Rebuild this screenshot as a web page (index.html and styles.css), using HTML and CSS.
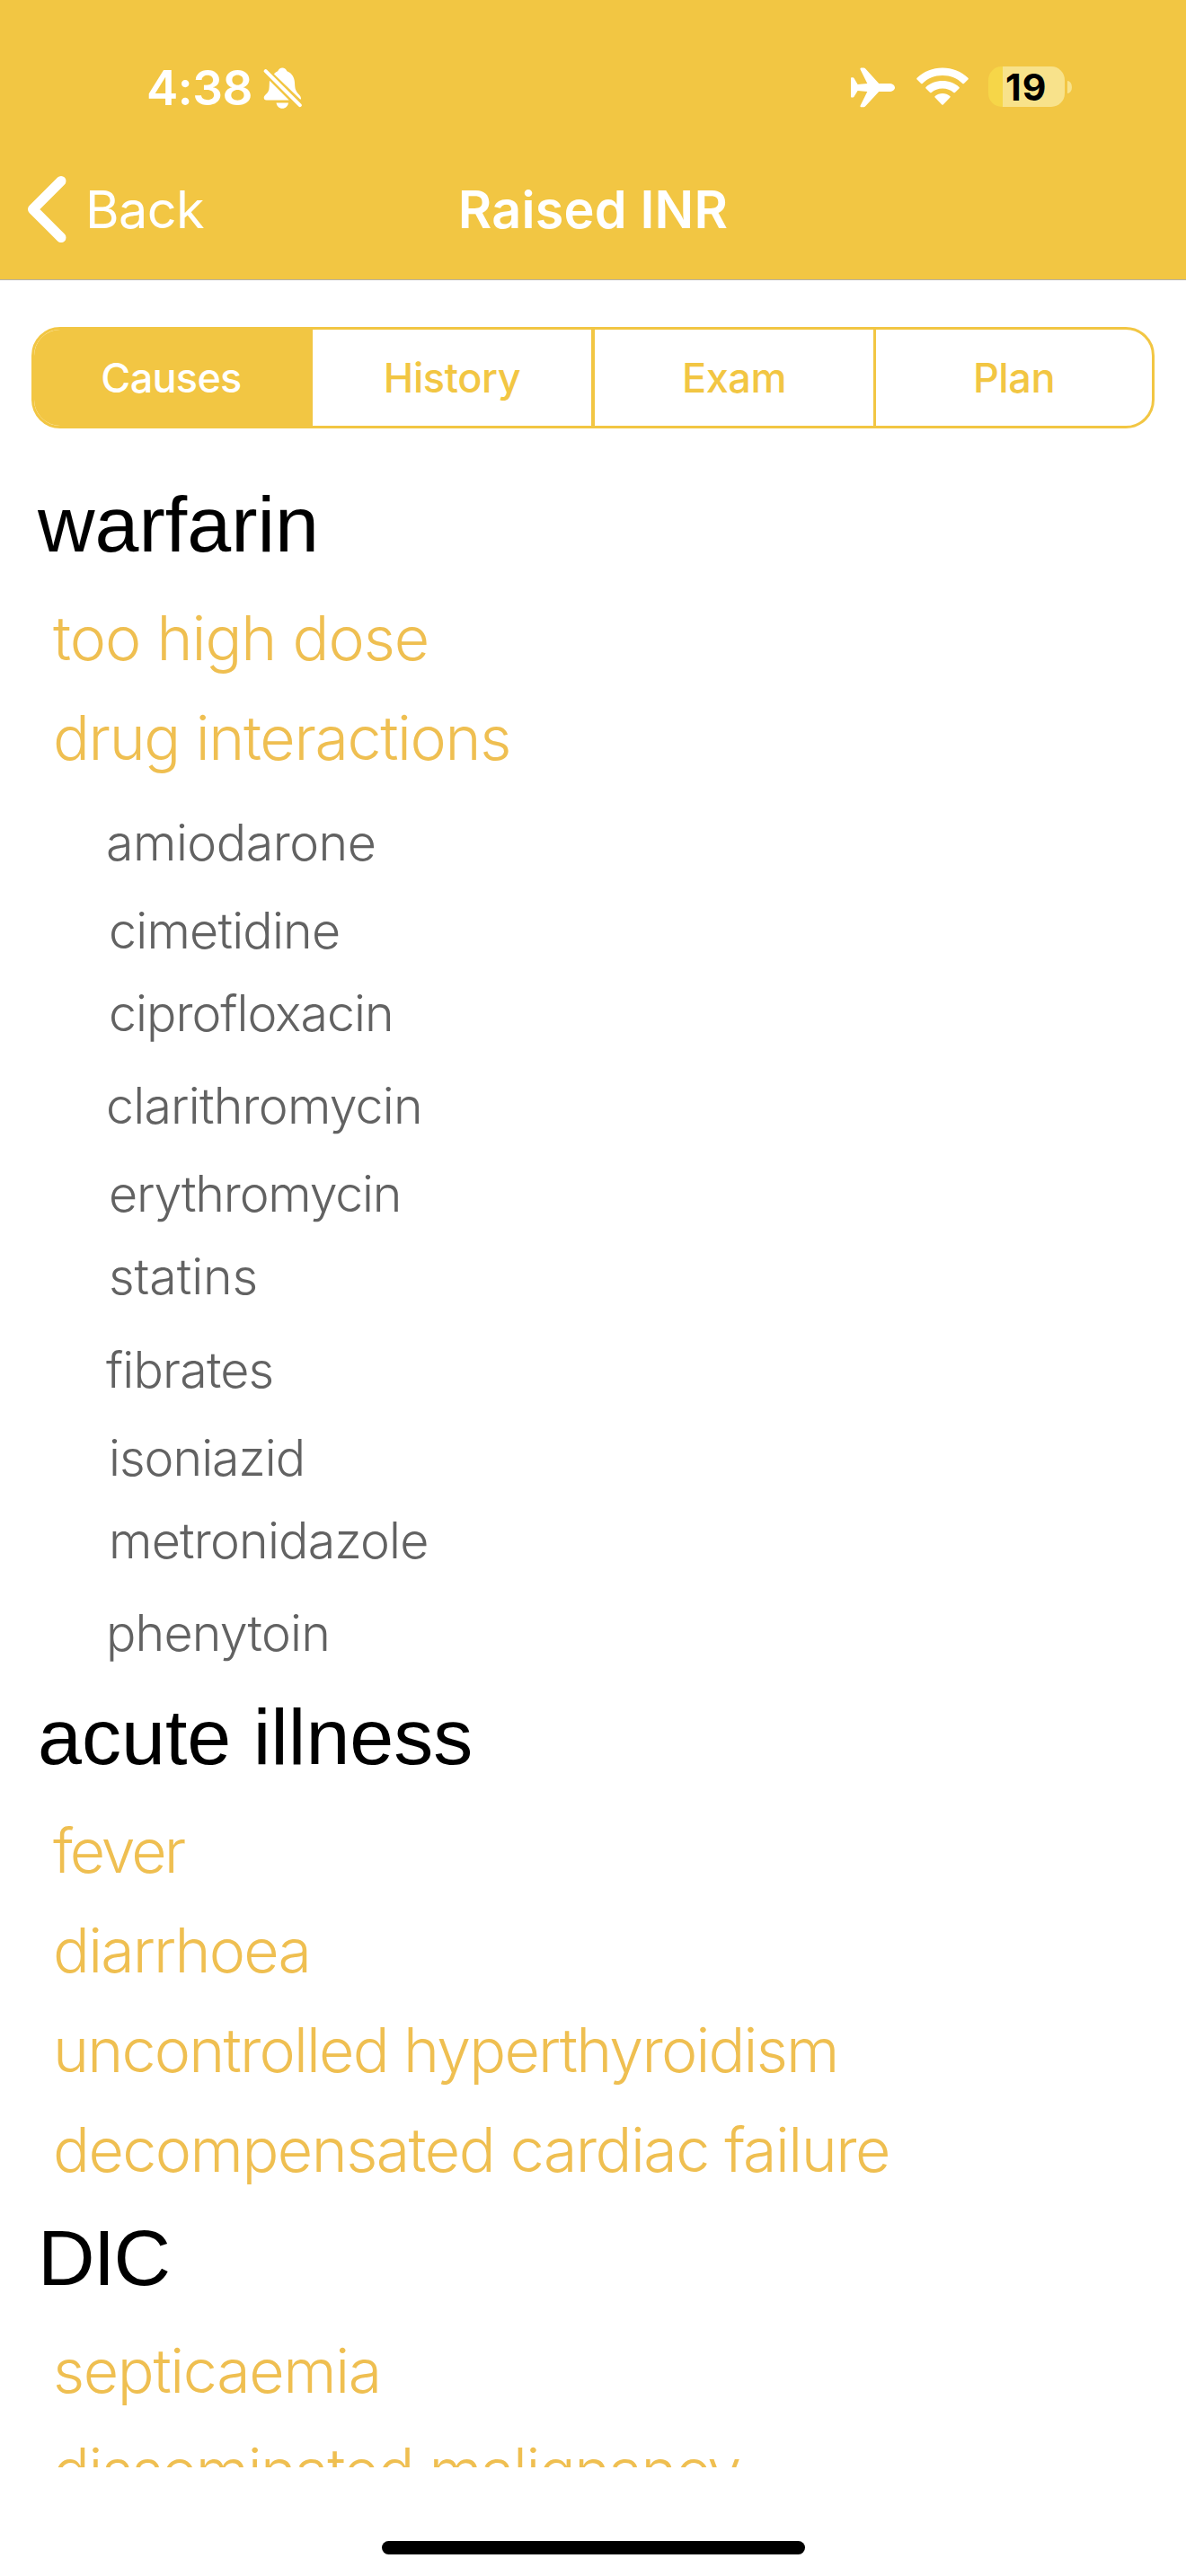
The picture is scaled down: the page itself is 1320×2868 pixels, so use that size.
FILE: index.html
```html
<!DOCTYPE html>
<html lang="en">
<head>
<meta charset="utf-8">
<title>Raised INR</title>
<link rel="stylesheet" href="styles.css">
</head>
<body>
<header class="header">
  <div class="status">
    <span class="time">4:38</span>
    <svg class="bell" width="44" height="48" viewBox="0 0 44 48" fill="#fff">
      <path d="M13 7.400C14 5.800 15.800 5 17.200 4.300C18 1.800 20 .5 22.200 .5C24.500 .5 26.500 1.800 27.400 4.300C33 6.500 35.600 11 36 17C36.300 25 37.200 26.300 40.500 30C42.300 32 43 33 43 35Q43 35.300 42.300 35.800Z"/>
      <path d="M8 14.800L29.700 36.500H4.500C2.600 36.500 1.700 35.300 1.700 33.800C1.700 31 6.600 29 7.400 24.500C7.900 21.500 7.700 18 8 14.800Z"/>
      <path d="M15.500 39.400H29C28.500 43 25.800 45.700 22.200 45.700C18.600 45.700 16 43 15.500 39.400Z"/>
      <path d="M3.700 4.200L41.800 42.200" stroke="#fff" stroke-width="4" stroke-linecap="round"/>
    </svg>
    <svg class="plane" width="49" height="46" viewBox="0 0 49 46" fill="#fff">
      <path d="M0 12Q0 11.200 .8 11.200H2.300Q3 11.200 3.500 12L7.600 19L18.300 18L10.500 2.200Q10 .4 11.500 .4H14.300Q15 .4 15.800 1.100L31.200 17.900H42.500C46.300 17.900 49 20 49 22.500C49 25 46.300 27 42.500 27H31.200L16.200 43.300Q15.200 44.200 14.500 44.200H11.200Q10 44.200 10.600 42.600L18.300 26.900L7.600 26L3.500 32.800Q3 33.500 2.300 33.500H.8Q0 33.500 0 32.700Z"/>
    </svg>
    <svg class="wifi" width="58" height="43" viewBox="0 0 58 43" fill="#fff">
      <path d="M.6 13.500Q-.2 12.700 .6 11.800C8 4.500 18 .4 29 .4C40 .4 50 4.500 57.400 11.800Q58.200 12.700 57.400 13.500L52.900 18Q52.100 18.700 51.300 18C45.500 12.300 37.700 9.100 29 9.100C20.300 9.100 12.500 12.300 6.700 18Q5.900 18.700 5.100 18Z"/>
      <path d="M10.500 23.400Q9.800 22.600 10.500 21.900C15.500 17.200 22 14.900 29 14.900C36 14.900 42.500 17.200 47.500 21.900Q48.200 22.600 47.500 23.400L42.900 28Q42.100 28.700 41.300 28C38 25 33.700 23.400 29 23.400C24.300 23.400 20 25 16.700 28Q15.900 28.700 15.100 28Z"/>
      <path d="M20.600 33.600Q19.900 32.800 20.700 32.100C23 30 26 29.100 29 29.100C32 29.100 35 30 37.300 32.100Q38.100 32.800 37.400 33.600L29.700 41.400Q29 42 28.300 41.400Z"/>
    </svg>
    <div class="battery"><span class="level">19</span></div>
    <span class="nub"></span>
  </div>
  <nav class="nav">
    <a class="back">
      <svg width="44" height="76" viewBox="0 0 44 76" fill="none" stroke="#fff" stroke-width="11" stroke-linecap="round" stroke-linejoin="round">
        <path d="M38 6.500L6.500 38L38 69.500"/>
      </svg>
      <span>Back</span>
    </a>
    <h1 class="title">Raised INR</h1>
  </nav>
</header>
<div class="tabs">
  <span class="tab active">Causes</span>
  <span class="tab middle">History</span>
  <span class="tab">Exam</span>
  <span class="tab">Plan</span>
</div>
<main class="content">
  <section class="group">
    <h2>warfarin</h2>
    <p class="item ls-10">too high dose</p>
    <p class="item">drug interactions</p>
    <ul class="drugs">
      <li class="ls-5">amiodarone</li>
      <li>cimetidine</li>
      <li class="ls-10">ciprofloxacin</li>
      <li>clarithromycin</li>
      <li class="ls-12">erythromycin</li>
      <li class="ls-1">statins</li>
      <li>fibrates</li>
      <li class="ls-10">isoniazid</li>
      <li>metronidazole</li>
      <li>phenytoin</li>
    </ul>
  </section>
  <section class="group">
    <h2>acute illness</h2>
    <p class="item ls-30">fever</p>
    <p class="item ls-18">diarrhoea</p>
    <p class="item ls-18">uncontrolled hyperthyroidism</p>
    <p class="item ls-15">decompensated cardiac failure</p>
  </section>
  <section class="group">
    <h2 class="ls-17">DIC</h2>
    <p class="item">septicaemia</p>
    <p class="item ls-15">disseminated malignancy</p>
  </section>
</main>
<footer class="home"><span class="home-bar"></span></footer>
</body>
</html>
```
FILE: styles.css
```css
* { box-sizing: border-box; margin: 0; padding: 0; }

body {
  width: 1320px;
  height: 2868px;
  display: flex;
  flex-direction: column;
  overflow: hidden;
  background: #fff;
  font-family: Inter, "Liberation Sans", sans-serif;
}

/* Header */
.header {
  height: 312px;
  padding-top: 50px;
  background: #f2c643;
  border-bottom: 1px solid #b3b1ab;
  color: #fff;
}

.status {
  height: 95px;
  padding-left: 163px;
  display: flex;
  align-items: center;
}

.time { width: 129px; font-size: 53px; font-weight: 600; letter-spacing: -0.5px; }
.bell { margin-top: 2px; }
.plane { margin-left: 611px; }
.wifi { margin: -3px 0 0 24px; }

.battery {
  width: 85px;
  height: 45px;
  margin: -2px 3px 0 22px;
  padding-left: 19px;
  display: flex;
  align-items: center;
  border-radius: 15px;
  background: linear-gradient(to right, #f6d648 16px, #f8e28b 16px);
}

.level { color: #000; font-size: 41px; font-weight: 700; letter-spacing: 1px; }

.nub {
  width: 5px;
  height: 14px;
  margin-top: -2px;
  border-radius: 0 5px 5px 0 / 0 7px 7px 0;
  background: #f8e28b;
}

.nav {
  height: 166px;
  padding-top: 10px;
  display: grid;
  grid-template-columns: 1fr auto 1fr;
  align-items: center;
  font-size: 57.5px;
}

.back {
  padding-left: 30px;
  display: flex;
  align-items: center;
  gap: 21px;
  letter-spacing: -0.6px;
}

.title { font-size: 57.5px; font-weight: 600; letter-spacing: 0.2px; }

/* Segmented control */
.tabs {
  height: 113px;
  margin: 52px 35px 0;
  display: grid;
  grid-template-columns: 310px 314px 313px 1fr;
  border: 3px solid #f2c643;
  border-radius: 32px;
  overflow: hidden;
}

.tab {
  display: flex;
  align-items: center;
  justify-content: center;
  border-right: 3px solid #f2c643;
  color: #f2c643;
  font-size: 45px;
  font-weight: 460;
  letter-spacing: -0.4px;
}

.tab.middle { border-right-width: 4px; }
.tab:last-child { border-right: 0; }

.tab.active {
  padding-right: 2px;
  background: #f2c643;
  color: #fff;
  letter-spacing: -0.7px;
}

/* Outline */
.content {
  height: 2270px;
  padding-top: 47px;
  overflow: hidden;
}

.group + .group { padding-top: 11px; }
.group:last-child { padding-top: 5px; }

h2 {
  height: 120px;
  margin-bottom: 11px;
  padding-left: 42px;
  line-height: 120px;
  font-family: "Liberation Sans", Arial, sans-serif;
  font-size: 88px;
  font-weight: 400;
}

.group:last-child h2 { margin-bottom: 10px; }

.item {
  height: 111px;
  padding-left: 59px;
  line-height: 111px;
  color: #efbf51;
  font-size: 68px;
  font-weight: 300;
  letter-spacing: -1.35px;
  white-space: nowrap;
}

.drugs { padding-top: 2px; list-style: none; }

.drugs li {
  height: 90px;
  padding-left: 121px;
  line-height: 90px;
  color: #626262;
  font-size: 55.5px;
  font-weight: 300;
  letter-spacing: -0.8px;
}

.drugs li:nth-child(3n+1) { margin-top: 13.5px; padding-left: 118px; }
.drugs li:nth-child(3n+2) { margin-top: 8px; }
.drugs li:nth-child(3n) { margin-top: 2px; }

/* Tracking */
h2.ls-17 { letter-spacing: -1.7px; }
.drugs .ls-1 { letter-spacing: -0.1px; }
.drugs .ls-5 { letter-spacing: -0.5px; }
.drugs .ls-10, .item.ls-10 { letter-spacing: -1px; }
.drugs .ls-12 { letter-spacing: -1.2px; }
.item.ls-15 { letter-spacing: -1.52px; }
.item.ls-18 { letter-spacing: -1.8px; }
.item.ls-30 { letter-spacing: -3px; }

/* Home indicator */
.home {
  flex: 1;
  padding: 82px 0 0 425px;
}

.home-bar {
  display: block;
  width: 471px;
  height: 15px;
  border-radius: 8px;
  background: #000;
}
```
